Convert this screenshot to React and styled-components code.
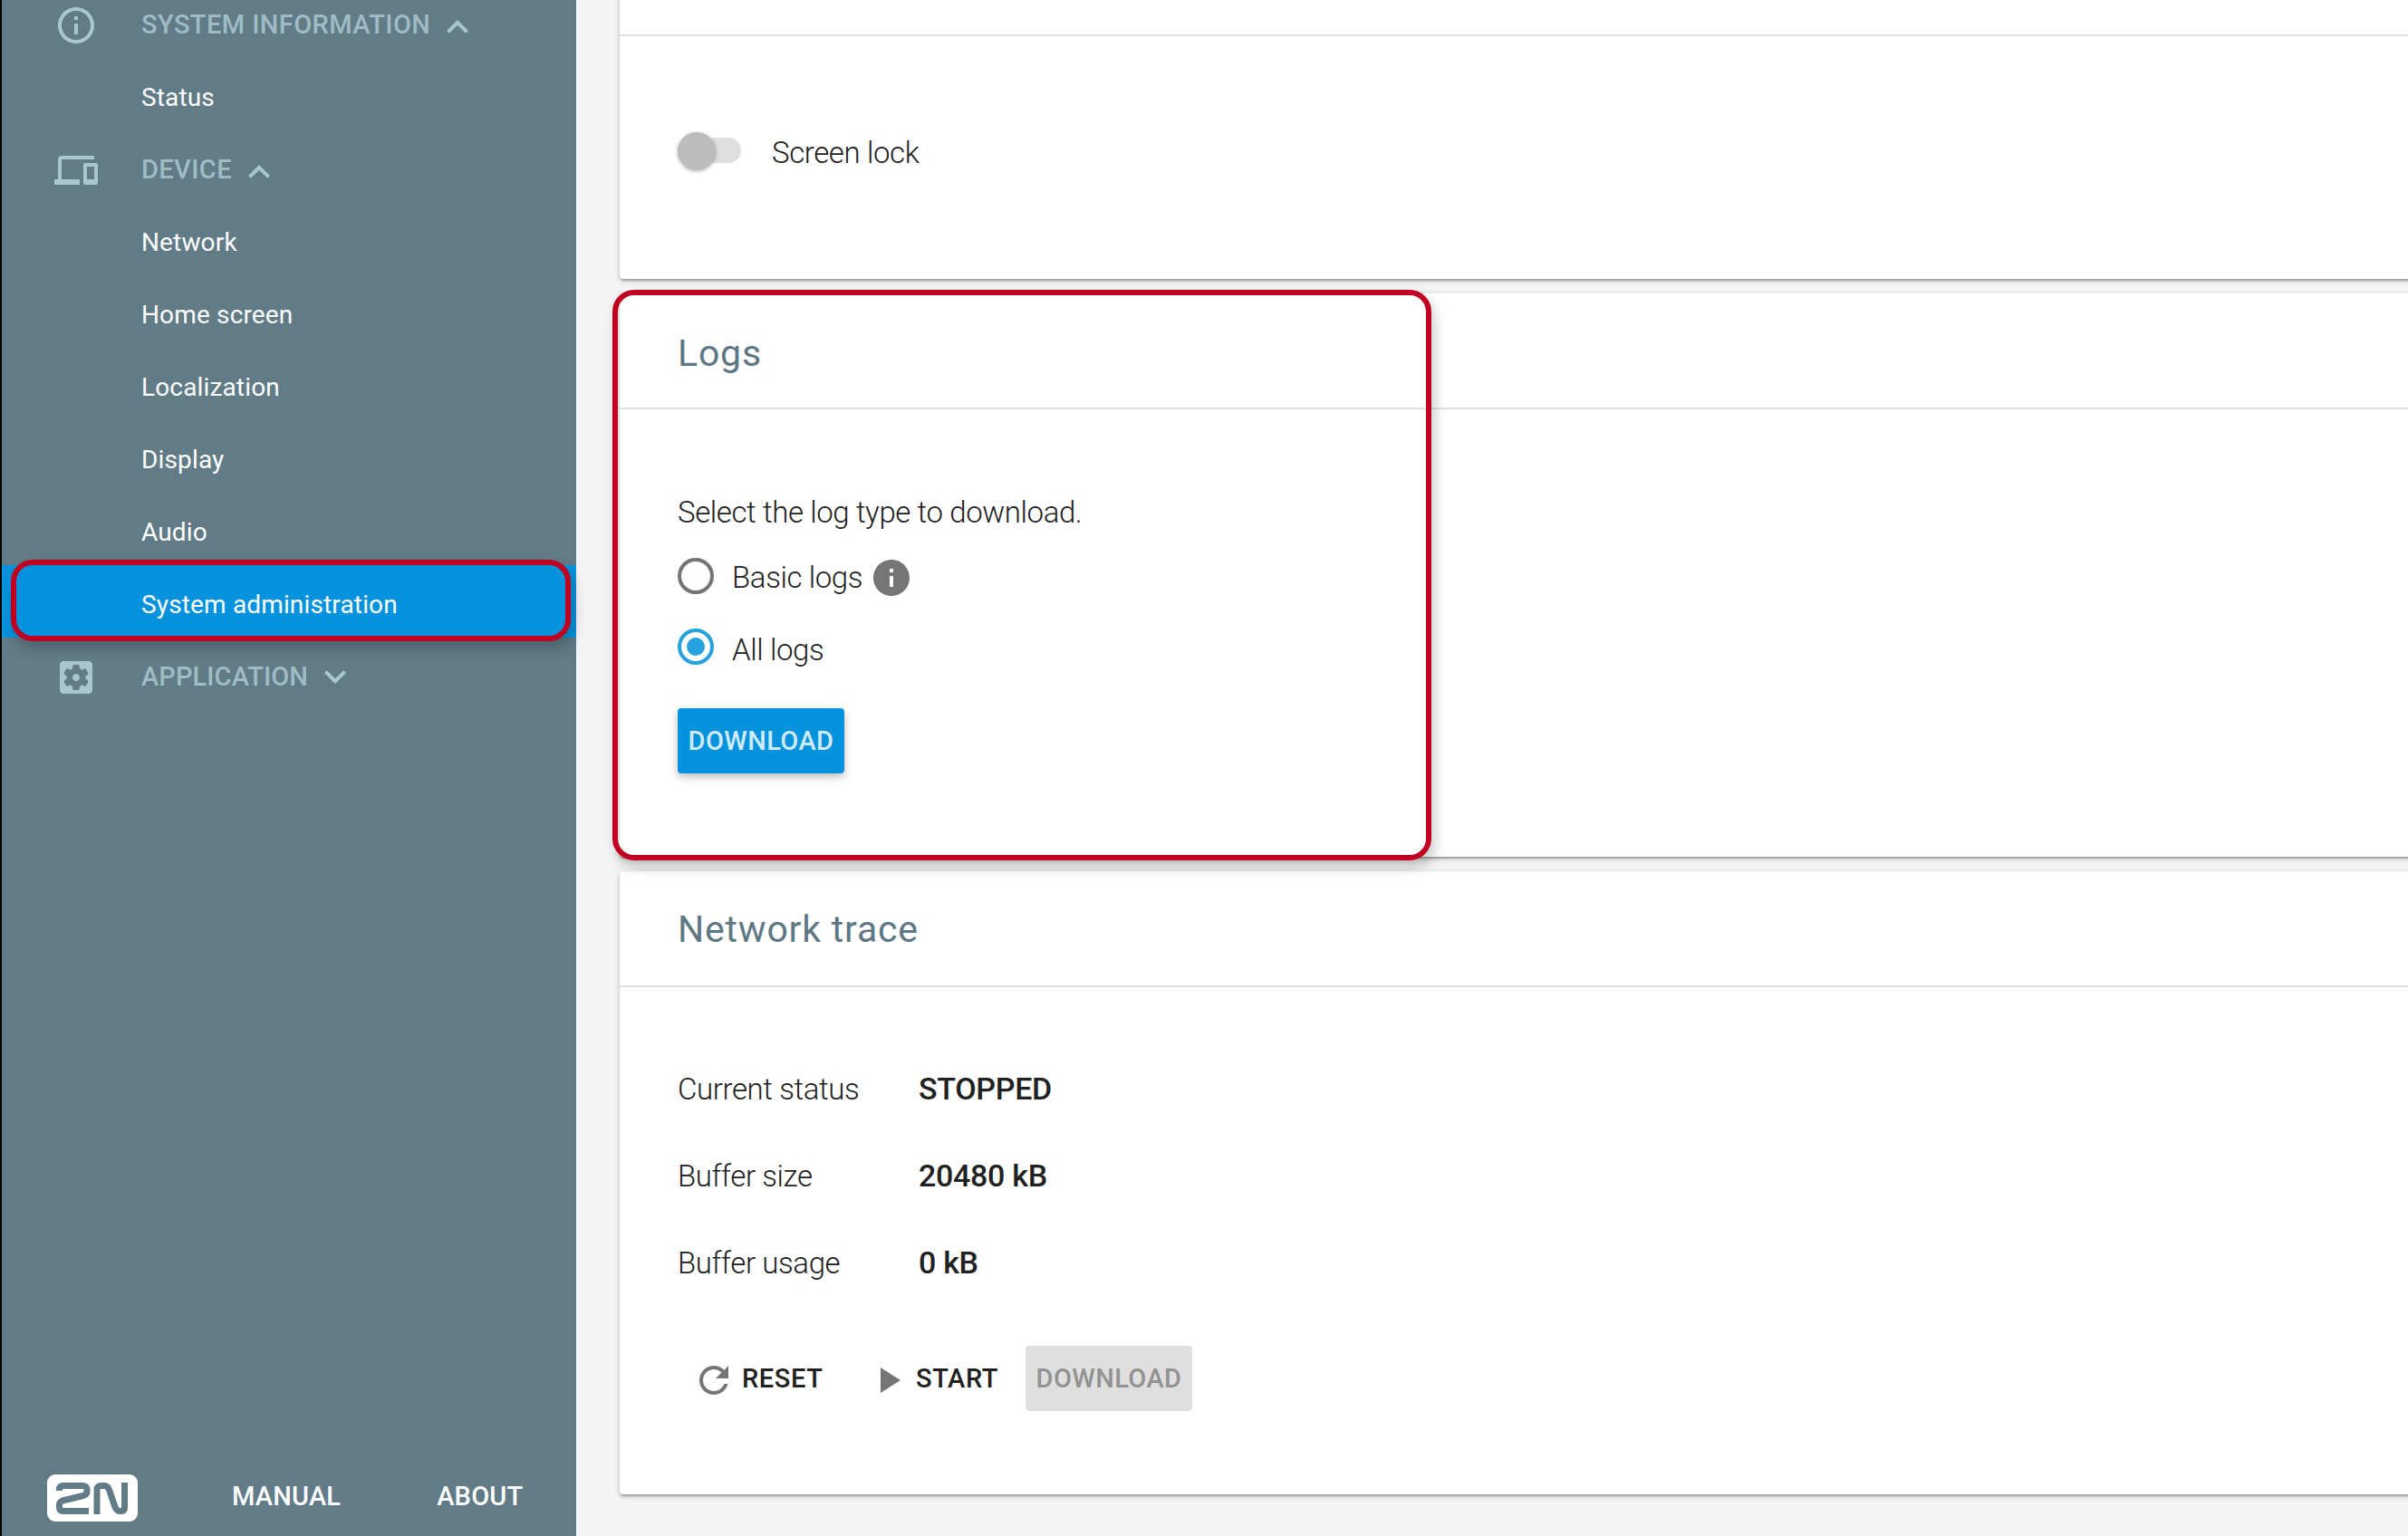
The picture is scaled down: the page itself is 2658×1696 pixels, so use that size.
import React from "react";
import styled, { createGlobalStyle, css } from "styled-components";

const GlobalStyle = createGlobalStyle`
  * { box-sizing: border-box; }
  html, body { margin: 0; overflow: hidden; }
  body {
    background: #f4f4f4;
    font-family: Roboto, "Liberation Sans", sans-serif;
    color: #212121;
  }
`;

const Shell = styled.div`
  display: flex;
  width: 2658px;
  height: 1696px;
  overflow: hidden;
  background: #f4f4f4;
`;

const Sidebar = styled.nav`
  display: flex;
  flex-direction: column;
  flex: none;
  width: 636px;
  border-left: 2px solid #000;
  background: #617b87;
`;

const Menu = styled.div`
  flex: 1;
  margin-top: -16px;
`;

const Section = styled.div`
  display: flex;
  align-items: center;
  height: 80px;
  padding: 8px 0 0 58px;
  color: #9fbcc4;
  font-size: 29px;
  line-height: 32px;
  font-weight: 500;
  letter-spacing: ${(p) => p.$track}px;
`;

const SectionLabel = styled.span`
  padding-bottom: 3px;
`;

const SectionIcon = styled.svg`
  flex: none;
  width: 48px;
  height: 48px;
  margin-right: 48px;
  fill: #a9c5cd;
`;

const Chevron = styled.svg`
  width: 48px;
  height: 48px;
  margin-left: 6px;
  margin-top: ${(p) => p.$drop ?? 4}px;
  fill: #a9c5cd;
`;

const Item = styled.a`
  position: relative;
  display: flex;
  align-items: center;
  height: 80px;
  padding: 8px 0 0 154px;
  font-size: 28px;
  line-height: 32px;
  letter-spacing: 0.15px;
  color: #fff;
  ${(p) => p.$active && css`background: #0692dc;`}
`;

const Frame = styled.div`
  position: absolute;
  z-index: 2;
  border: 6px solid #c00020;
  border-radius: 24px;
  box-shadow: 4px 8px 14px rgba(0, 0, 0, 0.2);
  pointer-events: none;
`;

const ItemFrame = styled(Frame)`
  left: 10px;
  top: -6px;
  width: 618px;
  height: 90px;
`;

const CardFrame = styled(Frame)`
  left: -8px;
  top: -4px;
  width: 904px;
  height: 630px;
`;

const Footer = styled.div`
  display: flex;
  align-items: center;
  height: 84px;
  padding: 0 0 0 50px;
`;

const Logo = styled.svg`
  width: 100px;
  height: 52px;
`;

const FooterLink = styled.a`
  margin-left: ${(p) => p.$gap}px;
  padding-bottom: 4px;
  font-size: 29px;
  line-height: 32px;
  font-weight: 500;
  letter-spacing: 0.2px;
  color: #fff;
`;

const Content = styled.main`
  display: flex;
  flex-direction: column;
  flex: none;
  gap: 16px;
  width: 2100px;
  padding-left: 48px;
`;

const Card = styled.section`
  position: relative;
  flex: none;
  height: ${(p) => p.$h}px;
  margin-top: ${(p) => p.$mt ?? 0}px;
  background: #fff;
  border-radius: 4px;
  box-shadow: 0 2px 6px rgba(0, 0, 0, 0.2), 0 2px 2px rgba(0, 0, 0, 0.14),
    0 4px 2px -2px rgba(0, 0, 0, 0.12);
`;

const CardHeader = styled.h2`
  display: flex;
  align-items: center;
  height: 128px;
  margin: 0;
  padding: ${(p) => p.$top ?? 4}px 64px 0;
  border-bottom: 2px solid #e0e0e0;
  font-size: 41px;
  line-height: 48px;
  font-weight: 400;
  letter-spacing: 0.8px;
  color: #5d7884;
`;

const CardBody = styled.div`
  display: flex;
  flex-direction: column;
  align-items: flex-start;
  padding: ${(p) => p.$top}px 64px 0;
  font-size: 33px;
  line-height: 40px;
  font-weight: 300;
  letter-spacing: -0.4px;
`;

const SwitchRow = styled.label`
  display: flex;
  align-items: center;
  gap: 32px;
`;

const Track = styled.span`
  display: flex;
  align-items: center;
  width: 68px;
  height: 28px;
  margin: 0 2px;
  border-radius: 14px;
  background: #dfdfdf;
`;

const Thumb = styled.span`
  flex: none;
  width: 42px;
  height: 42px;
  margin: 2px 0 0 -2px;
  border-radius: 50%;
  background: #bcbcbc;
  box-shadow: 0 1px 4px rgba(0, 0, 0, 0.3);
`;

const SwitchText = styled.span`
  margin-top: 6px;
`;

const RadioRow = styled.label`
  display: flex;
  align-items: center;
  height: 40px;
  margin-top: ${(p) => p.$mt}px;
`;

const Radio = styled.span`
  display: flex;
  align-items: center;
  justify-content: center;
  width: 40px;
  height: 40px;
  margin-right: 20px;
  border: 4px solid ${(p) => (p.$on ? "#27a2e0" : "#757575")};
  border-radius: 50%;
  &::after {
    content: "";
    width: 20px;
    height: 20px;
    border-radius: 50%;
    background: ${(p) => (p.$on ? "#27a2e0" : "transparent")};
  }
`;

const RadioText = styled.span`
  margin-top: ${(p) => p.$drop}px;
`;

const InfoIcon = styled.svg`
  width: 48px;
  height: 48px;
  margin: 4px 0 0 8px;
  fill: #757575;
`;

const Button = styled.button`
  display: flex;
  align-items: center;
  justify-content: center;
  flex: none;
  width: 184px;
  height: 72px;
  margin: ${(p) => p.$mt ?? 0}px 0 0;
  padding: 0;
  border: 0;
  border-radius: 4px;
  font: 500 29px/32px Roboto, "Liberation Sans", sans-serif;
  letter-spacing: 0.4px;
  background: #0692dc;
  color: #cfeaf8;
  box-shadow: 0 4px 10px rgba(0, 0, 0, 0.26);
  &:disabled {
    background: #dfdfdf;
    color: #929292;
    box-shadow: none;
  }
`;

const Facts = styled.dl`
  display: grid;
  grid-template-columns: 266px auto;
  grid-auto-rows: 96px;
  align-items: start;
  margin: 0;
`;

const Term = styled.dt`
  margin: 0;
`;

const Value = styled.dd`
  margin: -1px 0 0;
  font-size: 34px;
  font-weight: 500;
  letter-spacing: -0.3px;
`;

const Actions = styled.div`
  display: flex;
  align-items: center;
  height: 72px;
  margin-top: 15px;
`;

const Action = styled.span`
  display: flex;
  align-items: center;
  width: ${(p) => p.$w}px;
  margin-left: ${(p) => p.$ml}px;
  font-size: 29px;
  line-height: 32px;
  font-weight: 500;
  letter-spacing: 0.6px;
  white-space: nowrap;
`;

const ActionIcon = styled.svg`
  flex: none;
  width: 48px;
  height: 48px;
  margin: 4px 7px 0 0;
  fill: #757575;
`;

const paths = {
  info: "M11 7h2v2h-2zm0 4h2v6h-2zm1-9C6.48 2 2 6.48 2 12s4.48 10 10 10 10-4.48 10-10S17.52 2 12 2zm0 18c-4.41 0-8-3.59-8-8s3.59-8 8-8 8 3.59 8 8-3.59 8-8 8z",
  infoFilled: "M12 2C6.48 2 2 6.48 2 12s4.48 10 10 10 10-4.48 10-10S17.52 2 12 2zm1 15h-2v-6h2v6zm0-8h-2V7h2v2z",
  devices: "M4 6h18V4H4c-1.1 0-2 .9-2 2v11H0v3h14v-3H4V6zm19 2h-6c-.55 0-1 .45-1 1v10c0 .55.45 1 1 1h6c.55 0 1-.45 1-1V9c0-.55-.45-1-1-1zm-1 9h-4v-7h4v7z",
  settings: "M12 10c-1.1 0-2 .9-2 2s.9 2 2 2 2-.9 2-2-.9-2-2-2zm7-7H5c-1.11 0-2 .9-2 2v14c0 1.1.89 2 2 2h14c1.11 0 2-.9 2-2V5c0-1.1-.89-2-2-2zm-1.75 9c0 .23-.02.46-.05.68l1.48 1.16c.13.11.17.3.08.45l-1.4 2.42c-.09.15-.27.21-.43.15l-1.74-.7c-.36.28-.76.51-1.18.69l-.26 1.85c-.03.17-.18.3-.35.3h-2.8c-.17 0-.32-.13-.35-.29l-.26-1.85c-.43-.18-.82-.41-1.18-.69l-1.74.7c-.16.06-.34 0-.43-.15l-1.4-2.42c-.09-.15-.05-.34.08-.45l1.48-1.16c-.03-.23-.05-.46-.05-.69 0-.23.02-.46.05-.68l-1.48-1.16c-.13-.11-.17-.3-.08-.45l1.4-2.42c.09-.15.27-.21.43-.15l1.74.7c.36-.28.76-.51 1.18-.69l.26-1.85c.03-.17.18-.3.35-.3h2.8c.17 0 .32.13.35.29l.26 1.85c.43.18.82.41 1.18.69l1.74-.7c.16-.06.34 0 .43.15l1.4 2.42c.09.15.05.34-.08.45l-1.48 1.16c.03.23.05.46.05.69z",
  up: "M12 8l-6 6 1.41 1.41L12 10.83l4.59 4.58L18 14z",
  down: "M16.59 8.59L12 13.17 7.41 8.59 6 10l6 6 6-6z",
  refresh: "M17.65 6.35C16.2 4.9 14.21 4 12 4c-4.42 0-7.99 3.58-7.99 8s3.57 8 7.99 8c3.73 0 6.84-2.55 7.73-6h-2.08c-.82 2.33-3.04 4-5.65 4-3.31 0-6-2.69-6-6s2.69-6 6-6c1.66 0 3.14.69 4.22 1.78L13 11h7V4l-2.35 2.35z",
  play: "M8 5v14l11-7z",
};

const Glyph = ({ as: Tag, name, ...rest }) => (
  <Tag viewBox="0 0 24 24" {...rest}>
    <path d={paths[name]} />
  </Tag>
);

const deviceItems = ["Network", "Home screen", "Localization", "Display", "Audio", "System administration"];
const facts = [
  ["Current status", "STOPPED"],
  ["Buffer size", "20480 kB"],
  ["Buffer usage", "0 kB"],
];

export default function App() {
  return (
    <Shell>
      <GlobalStyle />
      <Sidebar>
        <Menu>
          <Section $track={0.42}>
            <Glyph as={SectionIcon} name="info" />
            <SectionLabel>SYSTEM INFORMATION</SectionLabel>
            <Glyph as={Chevron} name="up" />
          </Section>
          <Item>Status</Item>
          <Section $track={0.4}>
            <Glyph as={SectionIcon} name="devices" />
            <SectionLabel>DEVICE</SectionLabel>
            <Glyph as={Chevron} name="up" />
          </Section>
          {deviceItems.map((label) => {
            const active = label === "System administration";
            return (
              <Item key={label} $active={active}>
                {label}
                {active && <ItemFrame />}
              </Item>
            );
          })}
          <Section $track={0.1}>
            <Glyph as={SectionIcon} name="settings" />
            <SectionLabel>APPLICATION</SectionLabel>
            <Glyph as={Chevron} name="down" $drop={-2} />
          </Section>
        </Menu>
        <Footer>
          <Logo viewBox="0 0 100 52">
            <rect width="100" height="52" rx="9" fill="#fff" />
            <g fill="none" stroke="#617b87" strokeWidth="7" strokeLinejoin="round">
              <path d="M13.5 18V17Q13.5 12.5 18 12.5H39Q44 12.5 44 17V19Q44 22 40 23.5L17 29Q13.5 30.5 13.5 33.5V36Q13.5 40.5 18 40.5H46" />
              <path d="M55 44V17Q55 12.500 60 12.500H63Q67 12.500 68.500 17L75 36Q77 40.500 80 40.500H82Q85.500 40.500 85.500 36V9" />
            </g>
          </Logo>
          <FooterLink $gap={104}>MANUAL</FooterLink>
          <FooterLink $gap={106}>ABOUT</FooterLink>
        </Footer>
      </Sidebar>
      <Content>
        <Card $h={396} $mt={-88}>
          <CardHeader />
          <CardBody $top={103}>
            <SwitchRow>
              <Track>
                <Thumb />
              </Track>
              <SwitchText>Screen lock</SwitchText>
            </SwitchRow>
          </CardBody>
        </Card>
        <Card $h={622}>
          <CardHeader $top={6}>Logs</CardHeader>
          <CardBody $top={94}>
            Select the log type to download.
            <RadioRow $mt={30}>
              <Radio />
              <RadioText $drop={4}>Basic logs</RadioText>
              <Glyph as={InfoIcon} name="infoFilled" />
            </RadioRow>
            <RadioRow $mt={38}>
              <Radio $on />
              <RadioText $drop={8}>All logs</RadioText>
            </RadioRow>
            <Button $mt={48}>DOWNLOAD</Button>
          </CardBody>
          <CardFrame />
        </Card>
        <Card $h={688}>
          <CardHeader $top={2}>Network trace</CardHeader>
          <CardBody $top={93}>
            <Facts>
              {facts.map(([term, value]) => (
                <React.Fragment key={term}>
                  <Term>{term}</Term>
                  <Value>{value}</Value>
                </React.Fragment>
              ))}
            </Facts>
            <Actions>
              <Action $w={192} $ml={16}>
                <Glyph as={ActionIcon} name="refresh" />
                RESET
              </Action>
              <Action $w={176} $ml={0}>
                <Glyph as={ActionIcon} name="play" />
                START
              </Action>
              <Button disabled>DOWNLOAD</Button>
            </Actions>
          </CardBody>
        </Card>
      </Content>
    </Shell>
  );
}
